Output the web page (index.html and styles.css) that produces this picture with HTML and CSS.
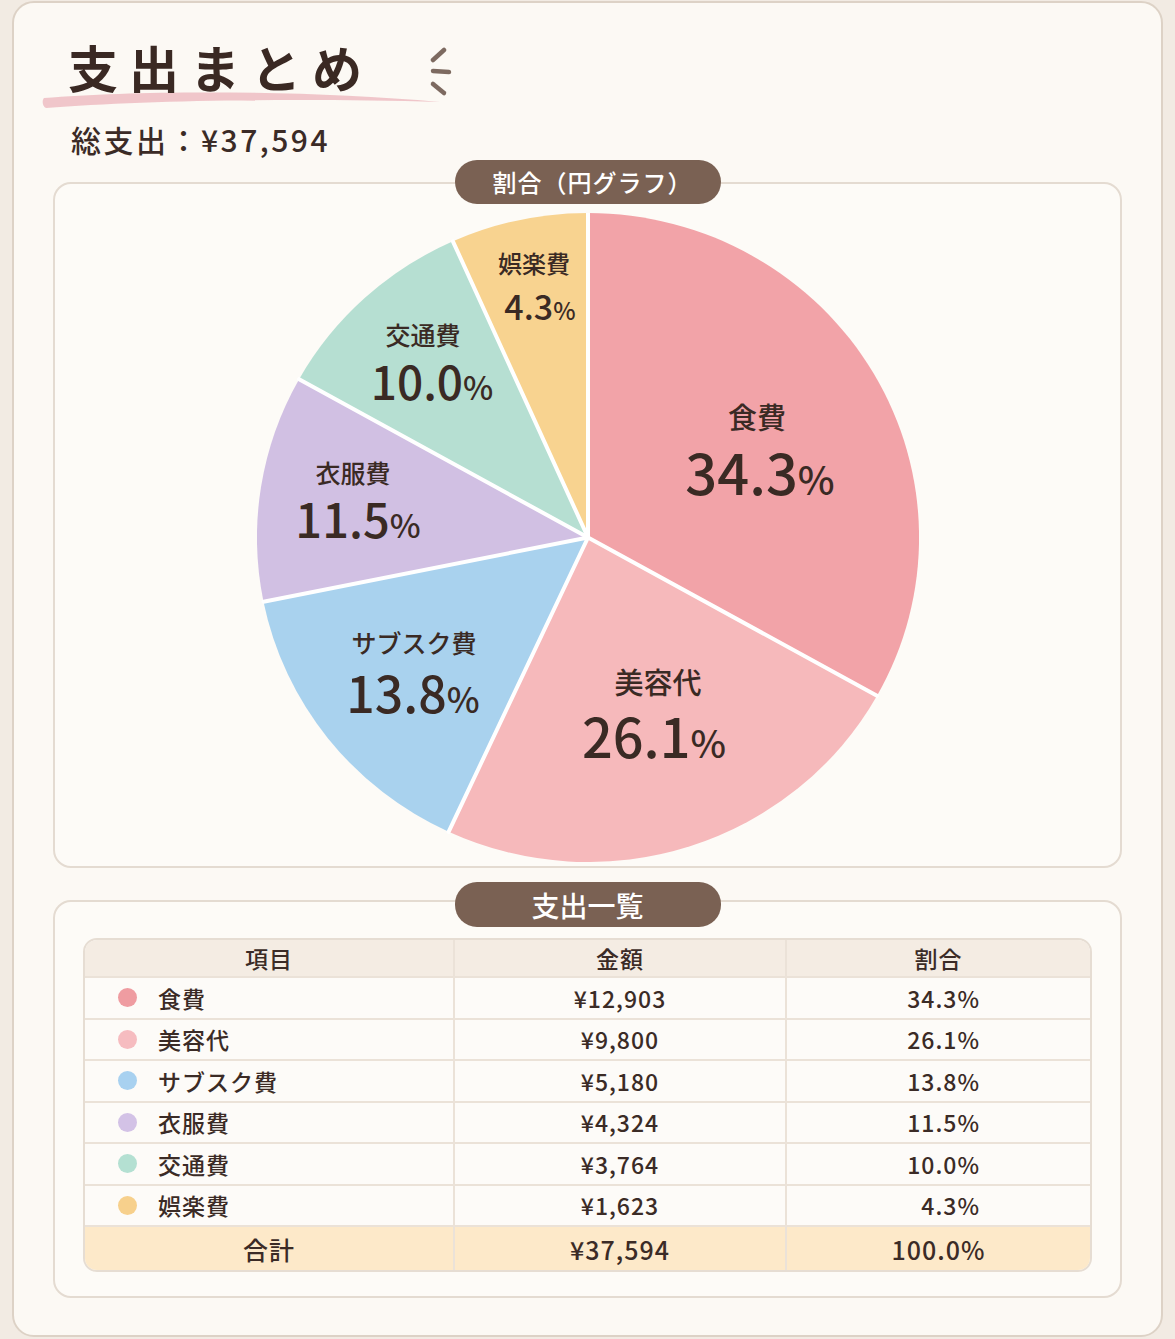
FILE: index.html
```html
<!DOCTYPE html>
<html lang="ja">
<head>
<meta charset="utf-8">
<title>支出まとめ</title>
<link rel="stylesheet" href="styles.css">
</head>
<body>
<div class="sheet">
  <header class="head">
    <div class="title-row">
      <svg class="brush" width="400" height="20" viewBox="0 0 400 20" aria-hidden="true">
        <path d="M2 9 C 100 1 260 1 398 13 C 260 9 100 11 4 19 C 0 17 0 11 2 9 Z" fill="#efc1c6" opacity="0.92"/>
      </svg>
      <h1 class="title">支出まとめ</h1>
      <svg class="sparkle" width="24" height="50" viewBox="0 0 24 50" aria-hidden="true">
        <g stroke="#7d6a60" stroke-width="4.5" stroke-linecap="round" fill="none">
          <path d="M15 3 L4 13"/>
          <path d="M4 24 L20 25"/>
          <path d="M4 37 L15 46"/>
        </g>
      </svg>
    </div>
    <p class="total">総支出：¥37,594</p>
  </header>

  <section class="card card-chart">
    <h2 class="pill">割合（円グラフ）</h2>
    <svg class="pie" width="662" height="649" viewBox="0 0 662 649">
      <path fill="#f2a3a8" d="M331 324.5 L331 0 A331 324.5 0 0 1 620 482.8 Z"/>
      <path fill="#f6b9bb" d="M331 324.5 L620 482.8 A331 324.5 0 0 1 191.6 618.8 Z"/>
      <path fill="#a9d2ee" d="M331 324.5 L191.6 618.8 A331 324.5 0 0 1 6.5 388.7 Z"/>
      <path fill="#d1c0e3" d="M331 324.5 L6.5 388.7 A331 324.5 0 0 1 42.1 166.2 Z"/>
      <path fill="#b6dfd2" d="M331 324.5 L42.1 166.2 A331 324.5 0 0 1 195.9 28.3 Z"/>
      <path fill="#f8d390" d="M331 324.5 L195.9 28.3 A331 324.5 0 0 1 331 0 Z"/>
      <g stroke="#ffffff" stroke-width="4" stroke-linecap="round">
        <line x1="331" y1="324.5" x2="331" y2="0"/>
        <line x1="331" y1="324.5" x2="620" y2="482.8"/>
        <line x1="331" y1="324.5" x2="191.6" y2="618.8"/>
        <line x1="331" y1="324.5" x2="6.5" y2="388.7"/>
        <line x1="331" y1="324.5" x2="42.1" y2="166.2"/>
        <line x1="331" y1="324.5" x2="195.9" y2="28.3"/>
      </g>
      <g class="pie-text" text-anchor="middle">
        <text class="lbl" x="500" y="216" font-size="29">食費</text>
        <text class="val" x="503" y="282" font-size="56">34.3<tspan class="pct">%</tspan></text>
        <text class="lbl" x="401" y="481" font-size="29">美容代</text>
        <text class="val" x="397" y="545" font-size="54">26.1<tspan class="pct">%</tspan></text>
        <text class="lbl" x="157" y="440" font-size="25">サブスク費</text>
        <text class="val" x="156" y="500" font-size="50">13.8<tspan class="pct">%</tspan></text>
        <text class="lbl" x="96" y="270" font-size="25">衣服費</text>
        <text class="val" x="101" y="325" font-size="47">11.5<tspan class="pct">%</tspan></text>
        <text class="lbl" x="166" y="132" font-size="25">交通費</text>
        <text class="val" x="175" y="187" font-size="46">10.0<tspan class="pct">%</tspan></text>
        <text class="lbl" x="277" y="60" font-size="24">娯楽費</text>
        <text class="val" x="283" y="107" font-size="34">4.3<tspan class="pct">%</tspan></text>
      </g>
    </svg>
  </section>

  <section class="card card-table">
    <h2 class="pill pill-lg">支出一覧</h2>
    <div class="table" role="table">
      <div class="row row-head" role="row">
        <div class="cell" role="columnheader">項目</div>
        <div class="cell" role="columnheader">金額</div>
        <div class="cell" role="columnheader">割合</div>
      </div>
      <div class="row" role="row">
        <div class="cell cell-name" role="cell"><span class="dot dot-food"></span>食費</div>
        <div class="cell" role="cell">¥12,903</div>
        <div class="cell cell-pct" role="cell">34.3%</div>
      </div>
      <div class="row" role="row">
        <div class="cell cell-name" role="cell"><span class="dot dot-beauty"></span>美容代</div>
        <div class="cell" role="cell">¥9,800</div>
        <div class="cell cell-pct" role="cell">26.1%</div>
      </div>
      <div class="row" role="row">
        <div class="cell cell-name" role="cell"><span class="dot dot-sub"></span>サブスク費</div>
        <div class="cell" role="cell">¥5,180</div>
        <div class="cell cell-pct" role="cell">13.8%</div>
      </div>
      <div class="row" role="row">
        <div class="cell cell-name" role="cell"><span class="dot dot-cloth"></span>衣服費</div>
        <div class="cell" role="cell">¥4,324</div>
        <div class="cell cell-pct" role="cell">11.5%</div>
      </div>
      <div class="row" role="row">
        <div class="cell cell-name" role="cell"><span class="dot dot-trans"></span>交通費</div>
        <div class="cell" role="cell">¥3,764</div>
        <div class="cell cell-pct" role="cell">10.0%</div>
      </div>
      <div class="row" role="row">
        <div class="cell cell-name" role="cell"><span class="dot dot-fun"></span>娯楽費</div>
        <div class="cell" role="cell">¥1,623</div>
        <div class="cell cell-pct" role="cell">4.3%</div>
      </div>
      <div class="row row-total" role="row">
        <div class="cell" role="cell">合計</div>
        <div class="cell" role="cell">¥37,594</div>
        <div class="cell" role="cell">100.0%</div>
      </div>
    </div>
  </section>
</div>
</body>
</html>
```

FILE: styles.css
```css
html, body {
  margin: 0;
}

body {
  background: #f2ebe3;
  font-family: "Noto Sans CJK JP", "Noto Sans", sans-serif;
  color: #3b2b26;
  padding: 1px 12px 0 12px;
  height: 1339px;
  box-sizing: border-box;
  overflow: hidden;
}

.sheet {
  height: 1336px;
  box-sizing: border-box;
  border: 2px solid #ddd2c6;
  border-radius: 22px;
  background: #fcf9f4;
  padding: 0 39px;
}

/* header */
.head {
  padding: 32px 0 0 15px;
}

.title-row {
  position: relative;
  display: flex;
  align-items: flex-start;
  height: 62px;
}

.title {
  position: relative;
  margin: 0;
  font-size: 50px;
  font-weight: 700;
  letter-spacing: 11px;
  line-height: 62px;
  color: #3a2923;
}

.brush {
  position: absolute;
  left: -26px;
  top: 54px;
}

.sparkle {
  margin: 12px 0 0 56px;
}

.total {
  margin: 22px 0 0 3px;
  font-size: 30px;
  font-weight: 500;
  line-height: 40px;
  letter-spacing: 2.5px;
}

/* cards */
.card {
  border: 2px solid #e4dbd1;
  border-radius: 18px;
  background: #fdfbf7;
  display: flex;
  flex-direction: column;
  align-items: center;
}

.card-chart {
  margin-top: 23px;
  height: 686px;
  box-sizing: border-box;
}

.card-table {
  margin-top: 32px;
  padding-bottom: 24px;
}

.pill {
  margin: -24px 0 0;
  width: 266px;
  height: 44px;
  box-sizing: border-box;
  padding-left: 10px;
  border-radius: 22px;
  background: #7a6153;
  color: #ffffff;
  font-size: 24px;
  font-weight: 500;
  letter-spacing: 1px;
  line-height: 1;
  display: flex;
  align-items: center;
  justify-content: center;
}

.pill-lg {
  margin-top: -20px;
  height: 45px;
  padding-left: 0;
  font-size: 28px;
  letter-spacing: 0;
}

/* pie */
.pie {
  display: block;
  margin-top: 9px;
}

.pie-text text {
  font-family: "Noto Sans CJK JP", "Noto Sans", sans-serif;
  fill: #3a2a24;
}

.pie-text .lbl {
  font-weight: 500;
}

.pie-text .val {
  font-weight: 500;
}

.pie-text .pct {
  font-size: 0.7em;
}

/* table */
.table {
  margin-top: 11px;
  width: 1009px;
  box-sizing: border-box;
  border: 2px solid #e6ddd3;
  border-radius: 14px;
  overflow: hidden;
  background: #fdfbf8;
  font-size: 23px;
  font-weight: 500;
  letter-spacing: 1px;
}

.row {
  display: grid;
  grid-template-columns: 368px 332px 1fr;
  height: 41.5px;
  box-sizing: border-box;
  border-bottom: 2px solid #ebe2d8;
}

.row-head {
  height: 38px;
  background: #f4ece3;
}

.row-total {
  height: 43px;
  border-bottom: none;
  background: #fde9c9;
  font-size: 25px;
}

.cell {
  display: flex;
  align-items: center;
  justify-content: center;
}

.cell + .cell {
  border-left: 2px solid #ebe2d8;
}

.cell-name {
  justify-content: flex-start;
  padding-left: 33px;
}

.cell-pct {
  justify-content: flex-end;
  padding-right: 110px;
}

.dot {
  width: 19px;
  height: 19px;
  border-radius: 50%;
  margin-right: 21px;
  flex: none;
}

.dot-food { background: #ef9ca1; }
.dot-beauty { background: #f6bcc0; }
.dot-sub { background: #a8d1f0; }
.dot-cloth { background: #d3c2e6; }
.dot-trans { background: #b4e0d2; }
.dot-fun { background: #f7d08c; }
```
